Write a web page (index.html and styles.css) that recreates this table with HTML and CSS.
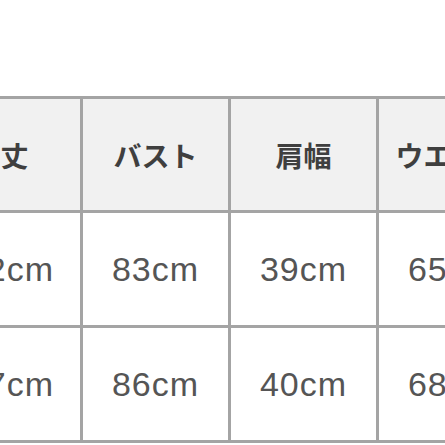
FILE: index.html
```html
<!DOCTYPE html>
<html lang="ja">
<head>
<meta charset="utf-8">
<link rel="stylesheet" href="styles.css">
</head>
<body>
<div class="wrap">
  <table class="size-table">
    <thead>
      <tr>
        <th class="first">着丈</th>
        <th>バスト</th>
        <th>肩幅</th>
        <th>ウエスト</th>
      </tr>
    </thead>
    <tbody>
      <tr>
        <td class="first">102cm</td>
        <td>83cm</td>
        <td>39cm</td>
        <td>65cm</td>
      </tr>
      <tr>
        <td class="first">107cm</td>
        <td>86cm</td>
        <td>40cm</td>
        <td>68cm</td>
      </tr>
    </tbody>
  </table>
</div>
</body>
</html>
```

FILE: styles.css
```css
html, body {
  margin: 0;
  padding: 0;
  background: #ffffff;
  overflow: hidden;
  width: 445px;
  height: 445px;
}

.wrap {
  padding-top: 96px;
  margin-left: -82px;
  width: 720px;
}

.size-table {
  border-collapse: collapse;
  table-layout: fixed;
}

.size-table th,
.size-table td {
  border: 3px solid #a4a4a4;
  width: 145px;
  padding: 0;
  text-align: center;
  vertical-align: middle;
}

.size-table th.first,
.size-table td.first {
  width: 159px;
}

.size-table th {
  height: 111px;
  background: #f1f1f1;
  color: #3f3f3f;
  font-family: "Noto Sans CJK JP", "Noto Sans", sans-serif;
  font-weight: 700;
  font-size: 28px;
}

.size-table td {
  height: 112px;
  background: #ffffff;
  color: #555555;
  font-family: "Liberation Sans", Arial, sans-serif;
  font-size: 34px;
  letter-spacing: 1px;
}
```
